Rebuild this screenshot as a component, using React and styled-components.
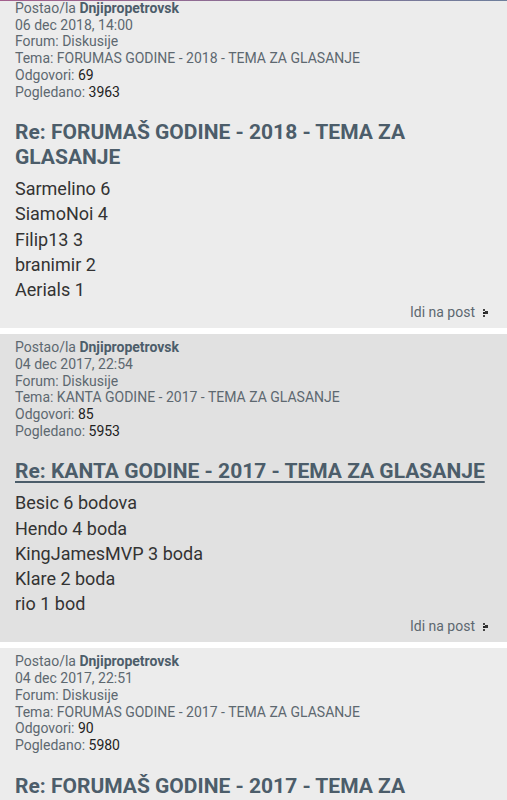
import React from 'react'
import styled, { createGlobalStyle } from 'styled-components'

const GlobalStyle = createGlobalStyle`
  html, body {
    margin: 0;
    padding: 0;
    background: #ffffff;
    font-family: Roboto, "Noto Sans", "Liberation Sans", sans-serif;
  }
`

const TopLine = styled.div`
  position: fixed;
  top: 0;
  left: 0;
  right: 0;
  height: 1px;
  background: linear-gradient(to right, #a35f8c, #8a6f95 50%, #6e7f9c);
  z-index: 2;
`

const List = styled.div`
  display: flex;
  flex-direction: column;
  gap: 6px;
  margin-top: -5px;
`

const Post = styled.div`
  background-color: ${p => (p.$alt ? '#e1e1e1' : '#ececec')};
  padding: 5px 15px 7px 15px;
  display: flex;
  flex-direction: column;
`

const Meta = styled.div`
  font-size: 14px;
  line-height: 16.7px;
  color: #5d6870;
`

const Author = styled.b`
  color: #4c5d6a;
  font-weight: 700;
`

const Value = styled.span`
  color: #222;
`

const Title = styled.h3`
  margin: 20px 0 6px 0;
  font-size: 21px;
  line-height: 25px;
  font-weight: 700;
  color: #4c5d6a;
  text-decoration: ${p => (p.$hover ? 'underline' : 'none')};
  text-decoration-thickness: 1.5px;
  text-underline-offset: 3px;
`

const Body = styled.div`
  font-size: 18px;
  line-height: 25.2px;
  color: #333;
`

const GoLink = styled.div`
  display: flex;
  justify-content: flex-end;
  align-items: center;
  gap: 8px;
  margin-top: 2px;
  padding-right: 2px;
  font-size: 14px;
  line-height: 17px;
  color: #5d6870;
`

const Arrow = () => (
  <svg width="7" height="8" viewBox="0 0 7 8">
    <rect x="0" y="0" width="2" height="2" fill="#444" />
    <rect x="2" y="2" width="3" height="3" fill="#333" />
    <rect x="0" y="3" width="2" height="2" fill="#222" />
    <rect x="0" y="6" width="2" height="2" fill="#444" />
  </svg>
)

const posts = [
  {
    date: '06 dec 2018, 14:00',
    topic: 'FORUMAS GODINE - 2018 - TEMA ZA GLASANJE',
    replies: 69,
    views: 3963,
    title: 'Re: FORUMAŠ GODINE - 2018 - TEMA ZA GLASANJE',
    lines: ['Sarmelino 6', 'SiamoNoi 4', 'Filip13 3', 'branimir 2', 'Aerials 1']
  },
  {
    date: '04 dec 2017, 22:54',
    topic: 'KANTA GODINE - 2017 - TEMA ZA GLASANJE',
    replies: 85,
    views: 5953,
    title: 'Re: KANTA GODINE - 2017 - TEMA ZA GLASANJE',
    hover: true,
    lines: ['Besic 6 bodova', 'Hendo 4 boda', 'KingJamesMVP 3 boda', 'Klare 2 boda', 'rio 1 bod']
  },
  {
    date: '04 dec 2017, 22:51',
    topic: 'FORUMAS GODINE - 2017 - TEMA ZA GLASANJE',
    replies: 90,
    views: 5980,
    title: 'Re: FORUMAŠ GODINE - 2017 - TEMA ZA GLASANJE',
    lines: ['Sarmelino 6', 'SiamoNoi 4', 'Filip13 3', 'branimir 2', 'Aerials 1']
  }
]

export default function App() {
  return (
    <>
      <GlobalStyle />
      <TopLine />
      <List>
        {posts.map((post, i) => (
          <Post key={i} $alt={i % 2 === 1}>
            <Meta>
              Postao/la <Author>Dnjipropetrovsk</Author>
              <br />
              {post.date}
              <br />
              Forum: Diskusije
              <br />
              Tema: {post.topic}
              <br />
              Odgovori: <Value>{post.replies}</Value>
              <br />
              Pogledano: <Value>{post.views}</Value>
            </Meta>
            <Title $hover={post.hover}>{post.title}</Title>
            <Body>
              {post.lines.map(line => (
                <div key={line}>{line}</div>
              ))}
            </Body>
            <GoLink>
              Idi na post <Arrow />
            </GoLink>
          </Post>
        ))}
      </List>
    </>
  )
}
